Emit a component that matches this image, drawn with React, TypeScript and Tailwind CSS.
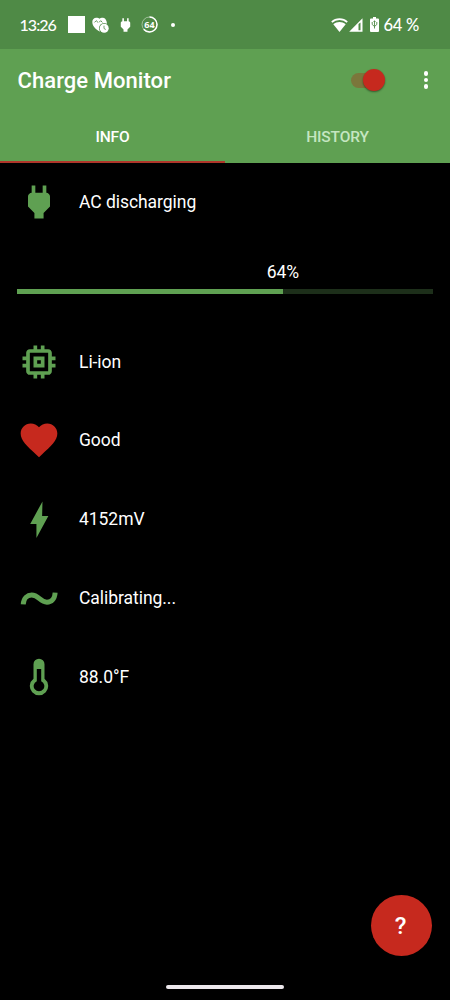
import type { ReactNode } from "react";

const LEVEL = 64;

const PLUG_PATH =
  "M16 7V3h-2v4h-4V3H8v4C7 7 6 8 6 9v5.5L9.5 18v3h5v-3l3.5-3.5V9c0-1-1-2-2-2z";

const Icon = ({ children, className }: { children: ReactNode; className: string }) => (
  <svg viewBox="0 0 24 24" fill="currentColor" className={className}>
    {children}
  </svg>
);

const StatusBar = () => (
  <div className="flex h-[49px] items-center bg-[#4f8a46] font-['Lato',sans-serif] text-white">
    <span className="ml-[19.5px] w-[36.5px] text-[16px] leading-none font-medium tracking-[-0.95px]">13:26</span>
    <div className="ml-3 h-[17px] w-[17px] bg-white" />
    {/* Heart with clock */}
    <svg viewBox="0 0 17 16" className="ml-[7px] h-4 w-[17px]">
      <path
        d="M4.300.8C2 .8.3 2.700.3 5c0 4 3.500 7.500 7.500 9.500L14 9c1-1.200 1-3.200.6-4.500C14 2.200 12.700.8 10.800.8 9.300.8 8.300 1.100 7.500 1.800 6.700 1.100 5.800.8 4.300.8z"
        fill="#fff"
      />
      <path d="M2.500 5.400 4.200 3.700 6 5.400M7 5.400l1.700-1.700 1.700 1.700" fill="none" stroke="#4f8a46" strokeWidth=".9" />
      <circle cx="12.200" cy="11.200" r="5.200" fill="#4f8a46" />
      <circle cx="12.200" cy="11.200" r="4.500" fill="#fff" />
      <path d="M12 8.700v2.800l1.800 1" fill="none" stroke="#4f8a46" strokeWidth=".8" />
    </svg>
    <svg viewBox="5 2.500 14 19" preserveAspectRatio="none" fill="currentColor" className="ml-[11px] h-[14px] w-[11px]">
      <path d={PLUG_PATH} />
    </svg>
    {/* Battery level ring */}
    <div className="relative ml-[10px] h-[17px] w-[17px]">
      <svg viewBox="0 0 17 17" className="h-full w-full -rotate-90" fill="none" stroke="#fff">
        <circle cx="8.500" cy="8.500" r="7.500" strokeWidth="1" strokeOpacity=".45" />
        <circle cx="8.500" cy="8.500" r="7.500" strokeWidth="1.500" pathLength="100" strokeDasharray={`${LEVEL} 100`} />
      </svg>
      <span className="absolute inset-0 text-center font-['Open_Sans',sans-serif] text-[9px] leading-[17px] font-bold">
        {LEVEL}
      </span>
    </div>
    <div className="ml-[13px] h-1 w-1 rounded-full bg-white" />

    <div className="mr-[31px] ml-auto flex items-center">
      {/* Wi-Fi */}
      <svg viewBox="0 0 17 14" className="h-[14px] w-[17px]">
        <path d="M.8 4.200C5 .2 12 .2 16.200 4.200" fill="none" stroke="#fff" strokeWidth="1.700" />
        <path d="M2.300 6.300c3.500-3 8.900-3 12.400 0L8.500 14z" fill="#fff" />
      </svg>
      {/* Mobile signal */}
      <svg viewBox="0 0 14 14" className="ml-px h-[14px] w-[14px]">
        <path fillRule="evenodd" d="M13.500.3v13.400H.2zM9.500 6v6.300h2V4.500z" fill="#fff" />
      </svg>
      <svg viewBox="0 0 9 15" className="ml-[7px] h-[15px] w-[9px]">
        <path d="M3 0h3v1.500h2q1 0 1 1V14q0 1-1 1H1q-1 0-1-1V2.500q0-1 1-1h2z" fill="#fff" />
        <path
          d="M4.500 3.500v8M2.200 5v2.500l2.300 2 2.300-2V5M3.500 4.500h2"
          fill="none"
          stroke="#4f8a46"
          strokeWidth=".9"
        />
      </svg>
      <span className="ml-[4.5px] pt-px text-[16.5px] leading-none font-medium tracking-[-0.3px]">{LEVEL} %</span>
    </div>
  </div>
);

const Toolbar = () => (
  <div className="flex h-[62px] items-center pl-[17.5px]">
    <h1 className="text-[22px] font-medium tracking-[0.06px]">Charge Monitor</h1>
    <div className="relative ml-auto h-[15px] w-[33px] rounded-full bg-[#7b763b]">
      <div className="absolute -top-[4px] right-[-1px] h-[22px] w-[22px] rounded-full bg-[#c6291e] shadow-[0_1px_2px_rgba(0,0,0,0.45)]" />
    </div>
    <div className="mr-[22px] ml-[40px] flex flex-col gap-[2px]">
      <div className="h-[4.5px] w-[4.5px] rounded-full bg-white" />
      <div className="h-[4.5px] w-[4.5px] rounded-full bg-white" />
      <div className="h-[4.5px] w-[4.5px] rounded-full bg-white" />
    </div>
  </div>
);

const Tabs = () => (
  <div className="grid h-[52px] grid-cols-2 text-center text-[15.5px] font-medium tracking-[-0.15px]">
    <div className="border-b-2 border-[#b0362a] pt-[2px] leading-[48px]">INFO</div>
    <div className="pt-[2px] leading-[48px] text-[#c5e6c1]">HISTORY</div>
  </div>
);

const InfoRow = ({ icon, label }: { icon: ReactNode; label: string }) => (
  <div className="flex h-[78.800px] items-center">
    {icon}
    <span className="ml-[18px]">{label}</span>
  </div>
);

const iconClass = "h-[44px] w-[44px] text-[#5fa052]";

const App = () => {
  return (
    <div className="flex h-[1000px] w-[450px] flex-col overflow-hidden bg-black font-['Roboto',sans-serif] text-white">
      <StatusBar />
      <header className="h-[114px] bg-[#5fa052]">
        <Toolbar />
        <Tabs />
      </header>

      <main className="flex-1 pr-[17.5px] pl-[17px] text-[17.500px] tracking-[-0.05px]">
        <InfoRow
          label="AC discharging"
          icon={
            <Icon className={iconClass}>
              <path d={PLUG_PATH} />
            </Icon>
          }
        />

        {/* Charge level */}
        <div className="h-[80.500px] pt-[17px]">
          <div className="leading-[26px]" style={{ width: `${LEVEL * 2}%` }}>
            <div className="text-center">{LEVEL}%</div>
          </div>
          <div className="mt-1 h-[5px] bg-[#1d2f1a]">
            <div className="h-full bg-[#5fa052]" style={{ width: `${LEVEL}%` }} />
          </div>
        </div>

        <InfoRow
          label="Li-ion"
          icon={
            <Icon className={iconClass}>
              <path d="M15 9H9v6h6V9zm-2 4h-2v-2h2v2zm8-2V9h-2V7c0-1.100-.9-2-2-2h-2V3h-2v2h-2V3H9v2H7c-1.100 0-2 .9-2 2v2H3v2h2v2H3v2h2v2c0 1.100.9 2 2 2h2v2h2v-2h2v2h2v-2h2c1.100 0 2-.9 2-2v-2h2v-2h-2v-2h2zm-4 6H7V7h10v10z" />
            </Icon>
          }
        />
        <InfoRow
          label="Good"
          icon={
            <Icon className="h-[44px] w-[44px] text-[#c6291e]">
              <path d="M12 21.350l-1.450-1.320C5.400 15.360 2 12.280 2 8.500 2 5.420 4.420 3 7.500 3c1.740 0 3.410.81 4.500 2.090C13.090 3.810 14.760 3 16.500 3 19.580 3 22 5.420 22 8.500c0 3.780-3.400 6.860-8.550 11.540L12 21.350z" />
            </Icon>
          }
        />
        <InfoRow
          label="4152mV"
          icon={
            <Icon className={iconClass}>
              <path d="M13.900 2.400 7.200 14.700h3.400v7.600l6.500-12H13.700z" />
            </Icon>
          }
        />
        <InfoRow
          label="Calibrating..."
          icon={
            <Icon className={iconClass}>
              <path
                d="M3.400 15.500C3.600 11.800 5.800 10.400 8 10.400c4 0 4.500 3.900 8.300 3.900 2.400 0 4.300-1.700 4.500-5.200"
                fill="none"
                stroke="currentColor"
                strokeWidth="2.700"
              />
            </Icon>
          }
        />
        <InfoRow
          label="88.0°F"
          icon={
            <Icon className={iconClass}>
              <path
                fillRule="evenodd"
                d="M9 5a3 3 0 0 1 6 0v8a5 5 0 1 1-6 0zM10.800 7.700v6.600a2.900 2.900 0 1 0 2.400 0V7.700z"
              />
            </Icon>
          }
        />
      </main>

      <footer className="flex flex-col">
        <button className="mr-[18px] flex h-[61px] w-[61px] items-center justify-center self-end rounded-full bg-[#c6291e] pt-px pr-[2px] text-[24px] font-medium">
          ?
        </button>
        <div className="mt-[29px] mb-[11px] h-1 w-[118px] self-center rounded-full bg-[#ece8ec]" />
      </footer>
    </div>
  );
};

export default App;
